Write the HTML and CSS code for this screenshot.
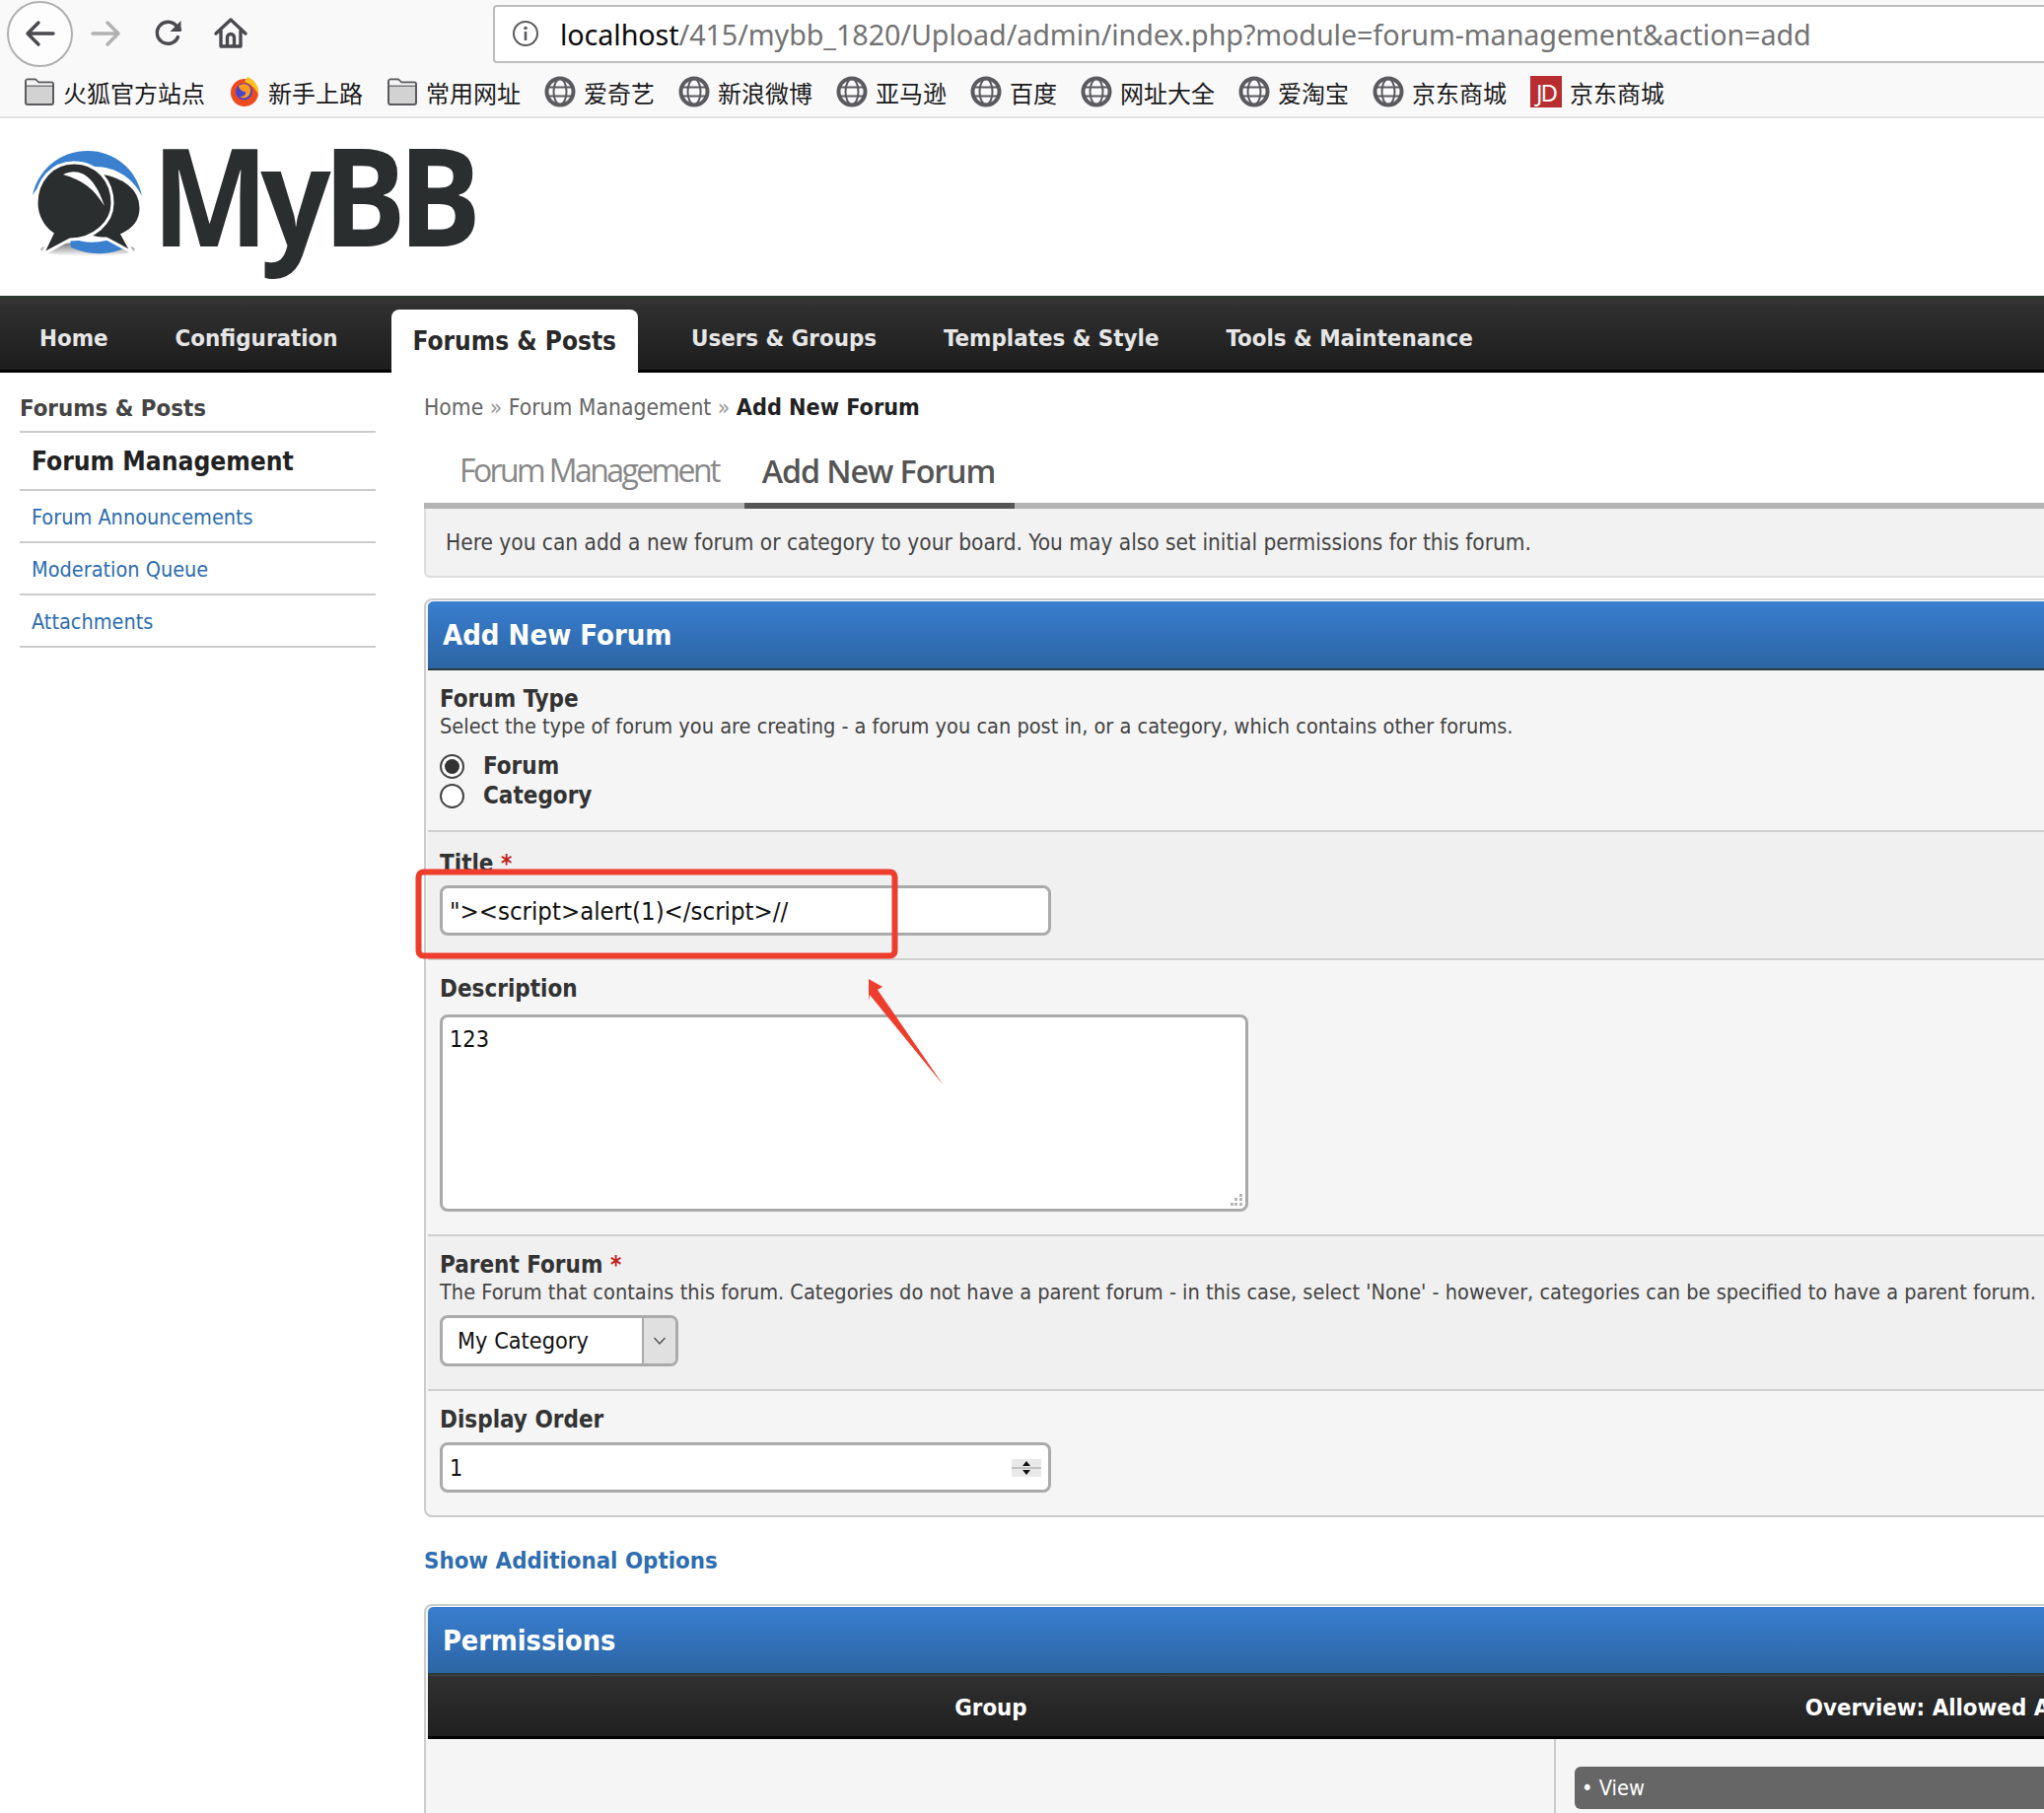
FILE: index.html
```html
<!DOCTYPE html>
<html lang="en">
<head>
<meta charset="utf-8">
<title>MyBB Admin - Add New Forum</title>
<link rel="stylesheet" href="styles.css">
</head>
<body>
<svg width="0" height="0" class="defs">
  <symbol id="folder" viewBox="0 0 32 32"><path d="M2 5.500a2 2 0 0 1 2-2h8l3 3h13a2 2 0 0 1 2 2V27a2 2 0 0 1-2 2H4a2 2 0 0 1-2-2z" fill="#d2d2d3" stroke="#5b5b5f" stroke-width="2"/><path d="M2 10h28" stroke="#5b5b5f" stroke-width="1.500"/><path d="M3 4.500h9l3 3h14v2H3z" fill="#f4f4f4"/></symbol>
  <symbol id="globe" viewBox="0 0 32 32"><g fill="none" stroke="#5b5b5f"><circle cx="16" cy="16" r="13.500" stroke-width="4"/><ellipse cx="16" cy="16" rx="6.500" ry="13" stroke-width="2"/><path d="M3 11.500h26M3 20.500h26" stroke-width="2"/></g></symbol>
</svg>

<header class="chrome">
  <div class="toolbar">
    <button class="back" aria-label="Back"><svg width="36" height="36" viewBox="0 0 36 36"><path d="M31 18H6M16 7 5 18l11 11" fill="none" stroke="#4a4a4f" stroke-width="3.400" stroke-linecap="round" stroke-linejoin="round"/></svg></button>
    <svg class="tool fwd" width="36" height="36" viewBox="0 0 36 36"><path d="M5 18h25M20 7l11 11-11 11" fill="none" stroke="#b1b1b3" stroke-width="3.400" stroke-linecap="round" stroke-linejoin="round"/></svg>
    <svg class="tool reload" width="36" height="36" viewBox="0 0 36 36"><path d="M27.500 21.500A11 11 0 1 1 26 10.500l3.500 3.500" fill="none" stroke="#4a4a4f" stroke-width="3.400" stroke-linecap="round"/><path d="M30.500 5v11h-11z" fill="#4a4a4f"/></svg>
    <svg class="tool home" width="36" height="36" viewBox="0 0 36 36"><path d="M3 18 18 4l15 14M8 15v16h20V15" fill="none" stroke="#4a4a4f" stroke-width="3.400" stroke-linecap="round" stroke-linejoin="round"/><path d="M14.500 31v-9a3.500 3.500 0 0 1 7 0v9" fill="none" stroke="#4a4a4f" stroke-width="3.400"/></svg>
    <div class="urlbar">
      <svg width="28" height="28" viewBox="0 0 28 28"><circle cx="14" cy="14" r="12" fill="none" stroke="#5b5b5f" stroke-width="2"/><rect x="12.700" y="12" width="2.600" height="9" fill="#5b5b5f"/><circle cx="14" cy="8.500" r="1.800" fill="#5b5b5f"/></svg>
      <span class="url"><span class="host">localhost</span>/415/mybb_1820/Upload/admin/index.php?module=forum-management&amp;action=add</span>
    </div>
  </div>
  <nav class="bookmarks">
    <a class="bm"><svg class="bmi"><use href="#folder"/></svg>火狐官方站点</a>
    <a class="bm"><svg class="bmi" viewBox="0 0 32 32"><circle cx="16" cy="17" r="14" fill="#ec4a1f"/><path d="M19 1c7 3 12 9 11 18-3-7-8-11-14-13 1-2 2-3 3-5z" fill="#ffc21f"/><circle cx="15.500" cy="16" r="8.500" fill="#4a45c8"/><path d="M10 10c6-4 13-1 12 6-1 6-7 8-11 5 4 0 7-2 6-5-3 0-6-2-7-6z" fill="#ff9a1f"/></svg>新手上路</a>
    <a class="bm"><svg class="bmi"><use href="#folder"/></svg>常用网址</a>
    <a class="bm"><svg class="bmi"><use href="#globe"/></svg>爱奇艺</a>
    <a class="bm"><svg class="bmi"><use href="#globe"/></svg>新浪微博</a>
    <a class="bm"><svg class="bmi"><use href="#globe"/></svg>亚马逊</a>
    <a class="bm"><svg class="bmi"><use href="#globe"/></svg>百度</a>
    <a class="bm"><svg class="bmi"><use href="#globe"/></svg>网址大全</a>
    <a class="bm"><svg class="bmi"><use href="#globe"/></svg>爱淘宝</a>
    <a class="bm"><svg class="bmi"><use href="#globe"/></svg>京东商城</a>
    <a class="bm"><span class="jd">JD</span>京东商城</a>
  </nav>
</header>

<div class="logo">
  <svg class="logo-mark" width="116" height="116" viewBox="0 0 116 116">
    <defs>
      <linearGradient id="shade" x1="0" y1="0" x2="0" y2="1"><stop offset="0" stop-color="#777"/><stop offset="1" stop-color="#fff"/></linearGradient>
    </defs>
    <ellipse cx="58" cy="103" rx="48" ry="7" fill="url(#shade)"/>
    <path d="M2 48C8 20 32 3 58 3c27 0 50 19 55 46-9-18-26-30-48-30C38 19 14 28 2 48z" fill="#3a80cf"/>
    <path d="M40 91c16 7 34 6 50-2l8 11c-18 10-38 9-57 1z" fill="#3a80cf"/>
    <path d="M70 25c24 3 42 16 42 36 0 13-8 22-19 27l10 18-26-14c-14 0-24-4-27-9z" fill="#2a2e2f" stroke="#fff" stroke-width="3"/>
    <path d="M44 15c24 0 39 19 39 41 0 20-19 37-43 37l-28 15 10-21C12 80 6 68 6 56c0-23 16-41 38-41z" fill="#2a2e2f" stroke="#fff" stroke-width="3"/>
    <path d="M33 27c17-8 32 2 42 32-11-18-22-26-42-32z" fill="#fff"/>
  </svg>
  <span class="logo-text">MyBB</span>
</div>

<nav class="mainnav">
  <a class="navitem">Home</a>
  <a class="navitem">Configuration</a>
  <a class="navitem active">Forums &amp; Posts</a>
  <a class="navitem">Users &amp; Groups</a>
  <a class="navitem">Templates &amp; Style</a>
  <a class="navitem">Tools &amp; Maintenance</a>
</nav>

<div class="layout">
  <aside class="sidebar">
    <h2 class="side-title">Forums &amp; Posts</h2>
    <a class="side-link current">Forum Management</a>
    <a class="side-link">Forum Announcements</a>
    <a class="side-link">Moderation Queue</a>
    <a class="side-link">Attachments</a>
  </aside>

  <main class="main">
    <div class="crumbs"><a>Home</a> <span class="sep">»</span> <a>Forum Management</a> <span class="sep">»</span> <b>Add New Forum</b></div>
    <div class="tabs">
      <a class="tab">Forum Management</a>
      <a class="tab on">Add New Forum</a>
    </div>
    <div class="notice">Here you can add a new forum or category to your board. You may also set initial permissions for this forum.</div>

    <section class="panel">
      <h3 class="panel-head">Add New Forum</h3>
      <div class="row first">
        <div class="label">Forum Type</div>
        <div class="desc">Select the type of forum you are creating - a forum you can post in, or a category, which contains other forums.</div>
        <div class="radios">
          <div class="radio"><span class="dot sel"></span>Forum</div>
          <div class="radio"><span class="dot"></span>Category</div>
        </div>
      </div>
      <div class="row alt title">
        <div class="label">Title <em>*</em></div>
        <div class="field text script">"&gt;&lt;script&gt;alert(1)&lt;/script&gt;//</div>
      </div>
      <div class="row">
        <div class="label">Description</div>
        <div class="field area">123
          <svg class="grip" width="14" height="14" viewBox="0 0 14 14"><path d="M10 1h3v3h-3zM5 5h3v3H5zM10 5h3v3h-3zM1 10h3v3H1zM5 10h3v3H5zM10 10h3v3h-3z" fill="#b5b5b5"/></svg>
        </div>
      </div>
      <div class="row alt">
        <div class="label">Parent Forum <em>*</em></div>
        <div class="desc">The Forum that contains this forum. Categories do not have a parent forum - in this case, select 'None' - however, categories can be specified to have a parent forum.</div>
        <div class="field select"><span class="sel-val">My Category</span><span class="sel-btn"><svg width="14" height="10" viewBox="0 0 14 10"><path d="M1.500 2 7 8l5.500-6" fill="none" stroke="#555" stroke-width="1.500"/></svg></span></div>
      </div>
      <div class="row last">
        <div class="label">Display Order</div>
        <div class="field text number">1
          <svg class="spin" width="30" height="18" viewBox="0 0 30 18"><rect width="30" height="18" fill="#e9e9e9"/><path d="M0 9h30" stroke="#9a9a9a"/><path d="M15 2l4 5h-8zM15 16l4-5h-8z" fill="#111"/></svg>
        </div>
      </div>
    </section>

    <a class="more">Show Additional Options</a>

    <section class="panel perms">
      <h3 class="panel-head">Permissions</h3>
      <div class="grid-head"><div class="col-a">Group</div><div class="col-b">Overview: Allowed Actions</div></div>
      <div class="grid-body">
        <div class="col-a"></div>
        <div class="col-b"><div class="pill">• View</div></div>
      </div>
    </section>
  </main>
</div>

<svg class="markup" width="2073" height="1839" viewBox="0 0 2073 1839">
  <rect x="424.500" y="884.500" width="483" height="85" rx="5" fill="none" stroke="#ee3d2d" stroke-width="6"/>
  <path d="M881 993l14 8-5 3 67 97-75-92-1 6z" fill="#ee3d2d"/>
</svg>
</body>
</html>
```
FILE: styles.css
```css
* { box-sizing: border-box; }
html, body { margin: 0; padding: 0; width: 2073px; height: 1839px; overflow: hidden; background: #fff; }
body { position: relative; font-family: "DejaVu Sans Condensed", "DejaVu Sans", sans-serif; font-stretch: condensed; font-size: 21.500px; color: #444; }
.defs { position: absolute; }

/* browser chrome */
.chrome { height: 120px; background: #f9f9fa; border-bottom: 2px solid #e2e2e3; font-family: "Noto Sans CJK SC", "Noto Sans", sans-serif; font-stretch: normal; }
.toolbar { height: 68px; display: flex; align-items: center; padding-left: 7px; }
.back { width: 67px; height: 67px; flex: none; border-radius: 50%; border: 2px solid #b1b1b3; background: #fdfdfd; padding: 0; display: flex; align-items: center; justify-content: center; margin-right: 15px; }
.tool { flex: none; margin-right: 28px; }
.home { margin-right: 0; margin-left: -1px; }
.urlbar { margin-left: 248px; flex: none; width: 1700px; height: 59px; background: #fff; border: 2px solid #bdbdbd; border-radius: 4px 0 0 4px; display: flex; align-items: center; padding-left: 17px; gap: 21px; }
.url { font-size: 28.750px; color: #737373; white-space: nowrap; font-family: "Noto Sans", sans-serif; letter-spacing: -.1px; }
.host { color: #0c0c0d; }
.bookmarks { height: 50px; display: flex; align-items: center; padding-left: 24px; gap: 24px; font-size: 24px; color: #1a1a1a; }
.bm { display: flex; align-items: center; gap: 8px; white-space: nowrap; }
.bmi { width: 32px; height: 32px; flex: none; }
.jd { width: 32px; height: 32px; flex: none; background: #b72d30; color: #fff; font-size: 24px; display: flex; align-items: center; justify-content: center; font-family: "Noto Sans", sans-serif; letter-spacing: -2px; }

/* logo */
.logo { height: 180px; display: flex; align-items: flex-start; padding: 30px 0 0 31px; }
.logo-mark { flex: none; }
.logo-text { font-family: "Open Sans", sans-serif; font-stretch: normal; font-weight: 700; font-size: 138px; line-height: 92px; color: #2a2e2f; margin-left: 7px; letter-spacing: -9px; transform: scaleX(.91); transform-origin: left top; }

/* main nav */
.mainnav { height: 78px; display: flex; align-items: flex-end; padding-left: 18px; gap: 24px; background: linear-gradient(#343434 4px, #2f2f2f 8px, #1d1d1d); border-top: 3px solid #2d3833; border-bottom: 3px solid #000; font-weight: 700; font-size: 23.850px; color: #e6e6e6; }
.navitem { height: 72px; padding: 8px 22px 0; display: flex; align-items: center; white-space: nowrap; }
.navitem.active { height: 64px; margin: 0 8px -3px; padding: 0 22px 1px; background: #fff; color: #2a2a2a; border-radius: 8px 8px 0 0; font-size: 26px; }

/* layout */
.layout { display: flex; align-items: flex-start; }
.sidebar { flex: none; width: 361px; margin-left: 20px; }
.side-title { margin: 0; padding: 22px 0 9px; font-size: 23.800px; line-height: 28px; font-weight: 700; color: #444; border-bottom: 2px solid #ccc; }
.side-link { display: block; padding: 0 12px; height: 53px; line-height: 54px; font-size: 21.500px; color: #2e6db0; border-bottom: 2px solid #ccc; white-space: nowrap; }
.side-link.current { height: 59px; line-height: 58px; font-size: 26.200px; font-weight: 700; color: #222; }

.main { flex: none; width: 1979px; margin-left: 49px; }
.crumbs { padding-top: 21px; line-height: 28px; height: 69px; color: #666; font-size: 22.700px; white-space: nowrap; }
.crumbs .sep { color: #999; }
.crumbs b { color: #222; font-size: 23.200px; }
.tabs { height: 69px; display: flex; padding-left: 24px; border-bottom: 6px solid #b4b4b4; border-radius: 6px 0 0 0; align-items: flex-end; }
.tab { height: 69px; padding: 0 12px; line-height: 60px; font-size: 32px; color: #888; letter-spacing: -2.600px; white-space: nowrap; margin-bottom: -6px; border-bottom: 6px solid transparent; font-family: "Open Sans", sans-serif; font-stretch: normal; }
.tab.on { margin-left: 14px; padding: 0 20px 0 18px; color: #555; font-weight: 600; font-size: 32.300px; letter-spacing: -1.100px; border-bottom-color: #555; }
.notice { height: 70px; line-height: 69px; padding-left: 20px; font-size: 22.470px; background: #f2f2f2; border: 2px solid #ddd; border-top: 0; border-radius: 0 0 6px 6px; white-space: nowrap; }

/* panels */
.panel { margin-top: 21px; border: 2px solid #ccc; border-radius: 8px; padding: 0 0 0 2px; background: #f5f5f5; overflow: hidden; }
.panel-head { margin: 0; height: 71px; padding: 1px 0 0 15px; line-height: 66px; border-top: 1px solid #fff; font-size: 29px; font-weight: 700; color: #fff; background: linear-gradient(#397ed0, #2c65a3); border-bottom: 2px solid #2a3a3a; border-radius: 6px 0 0 0; }
.row { padding: 15px 0 23px 12px; border-bottom: 2px solid #d0d0d0; }
.row.first { padding-bottom: 20px; }
.row.title { padding-top: 18px; }
.row.alt { background: #f0f0f0; }
.row.last { border-bottom: 0; padding-bottom: 23px; }
.label { font-size: 24px; font-weight: 700; line-height: 28px; color: #333; white-space: nowrap; }
.label em { color: #c0231c; font-style: normal; }
.desc { line-height: 28px; font-size: 21.570px; color: #444; white-space: nowrap; }
.radios { margin-top: 11px; }
.radio { display: flex; align-items: center; height: 30px; font-size: 24px; font-weight: 700; color: #333; }
.dot { width: 25px; height: 25px; border: 2px solid #444; border-radius: 50%; margin-right: 19px; background: #fff; display: flex; align-items: center; justify-content: center; flex: none; }
.dot.sel::after { content: ""; width: 15px; height: 15px; border-radius: 50%; background: #333; }
.field { position: relative; background: #fff; border: 3px solid #aaa; border-radius: 8px; color: #111; font-size: 23.300px; white-space: pre; }
.text { width: 620px; height: 49px; margin-top: 11px; line-height: 43px; padding-left: 7px; }
.script { margin-top: 8px; height: 51px; line-height: 46px; font-size: 25.500px; }
.area { width: 820px; height: 200px; margin-top: 12px; padding: 6px 7px; line-height: 32px; white-space: normal; }
.grip { position: absolute; right: 2px; bottom: 2px; }
.select { width: 242px; height: 52px; margin-top: 9px; display: flex; overflow: hidden; line-height: 46px; }
.sel-val { flex: 1; padding-left: 15px; }
.sel-btn { width: 34px; background: #e0e0e0; border-left: 2px solid #aaa; display: flex; align-items: center; justify-content: center; }
.number { margin-top: 9px; height: 51px; line-height: 45px; }
.spin { position: absolute; right: 7px; top: 14px; }
.more { display: block; margin-top: 30px; height: 28px; line-height: 28px; font-size: 23.800px; font-weight: 700; color: #2e6db0; }
.perms { margin-top: 30px; border-bottom: 0; border-radius: 8px 0 0 0; height: 300px; }
.perms .panel-head { height: 70px; line-height: 66px; font-size: 28.600px; }
.grid-head { display: flex; height: 65px; background: linear-gradient(#303030, #202020); border-top: 1px solid #444; border-bottom: 3px solid #000; color: #fff; font-weight: 700; font-size: 23.800px; line-height: 64px; text-align: center; }
.col-a { width: 1142px; flex: none; }
.col-b { flex: 1; }
.grid-body { display: flex; height: 120px; }
.grid-body .col-b { border-left: 2px solid #ccc; padding: 28px 0 0 19px; }
.pill { height: 43px; background: #666; border-radius: 6px; color: #fff; line-height: 44px; padding-left: 7px; font-size: 21.700px; }

/* annotation drawn over the screenshot */
.markup { position: absolute; left: 0; top: 0; pointer-events: none; }
```
